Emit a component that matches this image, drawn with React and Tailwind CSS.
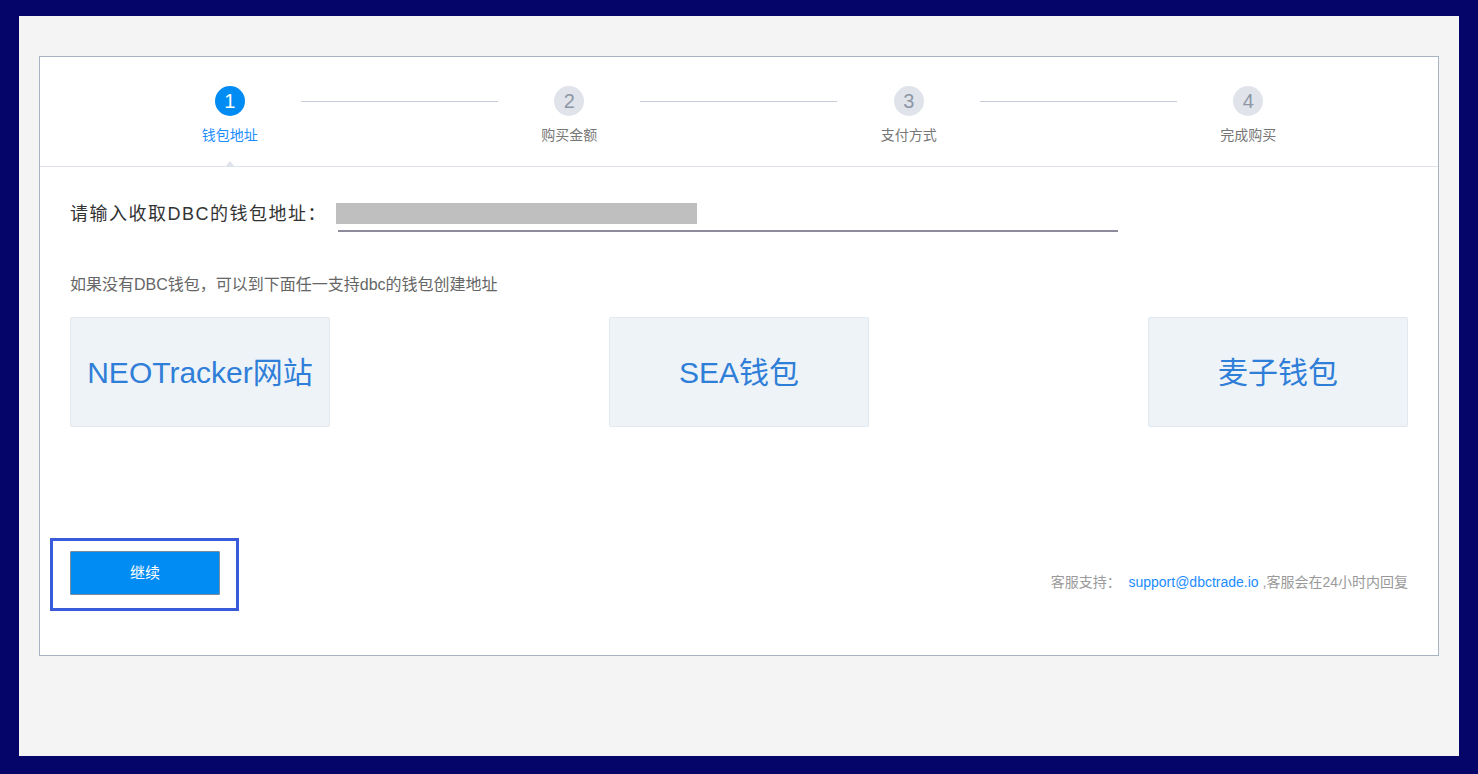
import React from 'react'

const steps = ['钱包地址', '购买金额', '支付方式', '完成购买']
const wallets = ['NEOTracker网站', 'SEA钱包', '麦子钱包']

export default function App() {
  return (
    <div className="w-[1478px] h-[774px] bg-[#050468] pt-[16px] pl-[19px] font-['Liberation_Sans','Noto_Sans_CJK_SC',sans-serif]">
      <div className="w-[1440px] h-[740px] bg-[#f4f4f4] pt-[40px] pl-[20px]">
        <div className="w-[1400px] h-[600px] bg-white border border-[#a9b3c3] flex flex-col">
          {/* steps */}
          <div className="relative h-[110px] border-b border-[#dfe4ea] flex px-[20px] pt-[29px]">
            {steps.map((s, i) => (
              <div key={i} className="relative flex-1 flex flex-col items-center">
                <div className={`w-[30px] h-[30px] rounded-full flex items-center justify-center text-[20px] ${i === 0 ? 'bg-[#008cf2] text-white' : 'bg-[#e0e4ea] text-[#8c96a6]'}`}>
                  {i + 1}
                </div>
                <div className={`mt-[10px] text-[14px] leading-[18px] ${i === 0 ? 'text-[#1a8cff]' : 'text-[#777]'}`}>{s}</div>
                {i < 3 && (
                  <div className="absolute top-[15px] left-[calc(50%+71px)] w-[197px] h-px bg-[#c3ccd8]" />
                )}
                {i === 0 && (
                  <div className="absolute top-[75px] w-0 h-0 border-l-[5px] border-r-[5px] border-b-[6px] border-l-transparent border-r-transparent border-b-[#dfe4ea]" />
                )}
              </div>
            ))}
          </div>

          <div className="px-[30px] flex-1 flex flex-col">
            <div className="flex items-start mt-[36px]">
              <div className="text-[18px] tracking-[1.5px] text-[#333] leading-[22px] w-[266px]">请输入收取DBC的钱包地址：</div>
              <div className="flex flex-col">
                <div className="w-[361px] h-[21px] bg-[#bfbfbf]" />
                <div className="mt-[6px] ml-[2px] w-[780px] h-[2px] bg-[#8b8b9b]" />
              </div>
            </div>

            <div className="mt-[43px] text-[16px] text-[#666] leading-[20px]">如果没有DBC钱包，可以到下面任一支持dbc的钱包创建地址</div>

            <div className="mt-[22px] flex justify-between">
              {wallets.map((w, i) => (
                <div key={i} className="w-[260px] h-[110px] bg-[#eef3f8] border border-[#e2e8ef] rounded-[2px] flex items-center justify-center text-[30px] text-[#2f7ed8]">
                  {w}
                </div>
              ))}
            </div>

            <div className="mt-[111px] flex items-center justify-between">
              <div className="ml-[-20px] border-[3px] border-[#3a5bd9] pl-[17px] pr-[16px] pt-[10px] pb-[13px]">
                <button className="w-[150px] h-[44px] bg-[#008cf2] text-white text-[15px] border border-[#7a8ca0] rounded-[1px]">继续</button>
              </div>
              <div className="text-[14px] text-[#999] mt-[16px]">
                客服支持：&nbsp; <span className="text-[#1a8cff]">support@dbctrade.io</span> ,客服会在24小时内回复
              </div>
            </div>
          </div>
        </div>
      </div>
    </div>
  )
}
